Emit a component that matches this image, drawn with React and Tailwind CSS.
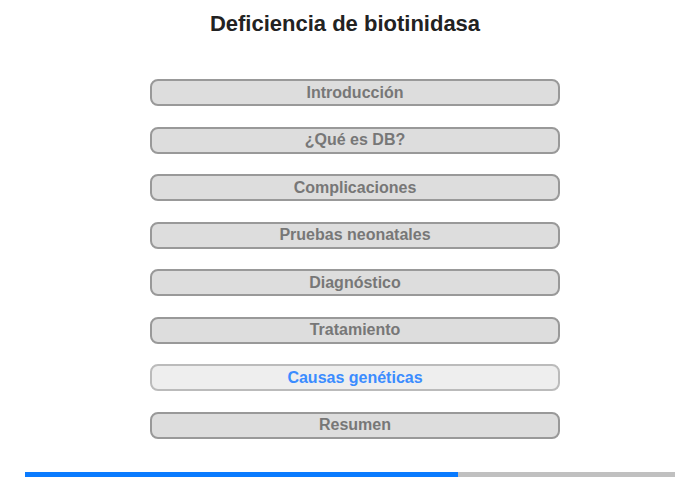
import React from "react";

const items = [
  "Introducción",
  "¿Qué es DB?",
  "Complicaciones",
  "Pruebas neonatales",
  "Diagnóstico",
  "Tratamiento",
  "Causas genéticas",
  "Resumen",
];

export default function App() {
  return (
    <div className="w-[700px] h-[480px] bg-white font-['Liberation_Sans',Arial,sans-serif] flex flex-col">
      <h1 className="text-[22px] leading-[26px] font-bold text-[#222] text-center pt-[11px] pr-[10px]">
        Deficiencia de biotinidasa
      </h1>
      <div className="flex flex-col gap-[20.5px] mt-[42px] pl-[150px]">
        {items.map((t, i) => {
          const active = i === 6;
          return (
            <div
              key={t}
              className={
                active
                  ? "w-[410px] h-[27px] rounded-[8px] border-2 border-[#bbb] bg-[#eee] text-[#3b8cff] flex items-center justify-center text-[16px] font-bold"
                  : "w-[410px] h-[27px] rounded-[8px] border-2 border-[#999] bg-[#ddd] text-[#777] flex items-center justify-center text-[16px] font-bold"
              }
            >
              {t}
            </div>
          );
        })}
      </div>
      <div className="mt-[33px] mx-[25px] h-[5px] bg-[#c0c0c0] flex">
        <div className="w-[433px] h-full bg-[#0a7bff]" />
      </div>
    </div>
  );
}
